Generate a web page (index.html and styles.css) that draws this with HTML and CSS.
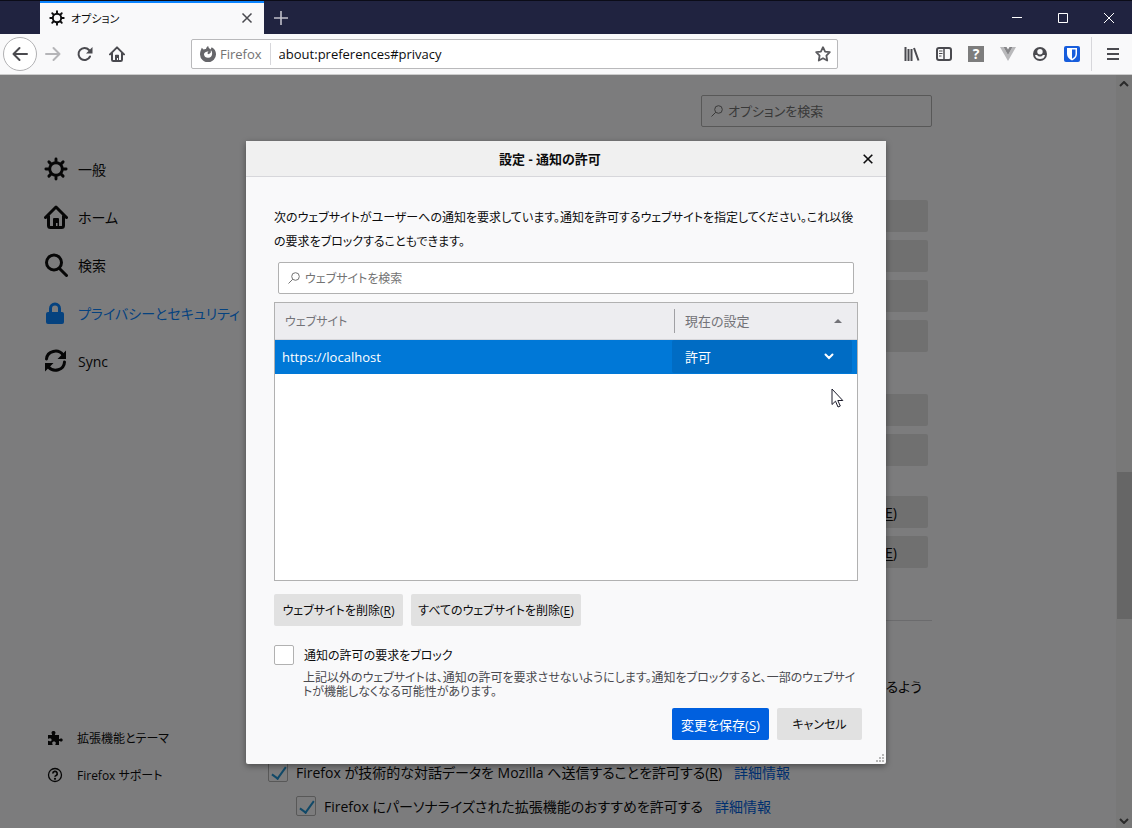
FILE: index.html
```html
<!DOCTYPE html>
<html lang="ja">

<head>
  <meta charset="UTF-8" />
  <meta name="viewport" content="width=device-width, initial-scale=1.0" />
  <title>オプション</title>
  <link rel="stylesheet" href="styles.css">
</head>

<body>
  <svg class="sprite" aria-hidden="true">
    <symbol id="gear" viewBox="0 0 24 24">
      <g fill="none" stroke="currentColor" stroke-linecap="round">
        <circle cx="12" cy="12" r="6.3" stroke-width="2.9" />
        <path stroke-width="2.9" d="M12 1.9v3M12 19.1v3M1.9 12h3M19.1 12h3M4.9 4.9l2 2M17.1 17.1l2 2M4.9 19.1l2-2M17.1 6.9l2-2" />
      </g>
    </symbol>
    <symbol id="home" viewBox="0 0 24 24">
      <path d="M1.5 12.5L12 2l10.500 10.500M4.500 11v9.500a2 2 0 0 0 2 2h11a2 2 0 0 0 2-2V11" fill="none" stroke="currentColor" stroke-width="3" stroke-linecap="round" stroke-linejoin="round" />
      <path d="M9 14a1 1 0 0 1 1-1h4a1 1 0 0 1 1 1v8h-1.500v-4h-1.500v4H9z" fill="currentColor" />
    </symbol>
  </svg>

  <header>
    <div class="tabbar">
      <div class="tab">
        <svg class="i16"><use href="#gear" /></svg>
        <span>オプション</span>
        <button class="tab-close" aria-label="タブを閉じる">
          <svg width="12" height="12" viewBox="0 0 12 12"><path d="M1.500 1.500l9 9M10.500 1.500l-9 9" stroke="#4a4a4f" stroke-width="1.500" /></svg>
        </button>
      </div>
      <button class="new-tab" aria-label="新しいタブ">
        <svg width="14" height="14" viewBox="0 0 14 14"><path d="M7 0v14M0 7h14" stroke="#c0c0ca" stroke-width="1.600" /></svg>
      </button>
      <div class="window-controls">
        <button aria-label="最小化"><svg width="10" height="10"><path d="M0 4.500h10" stroke="#fff" /></svg></button>
        <button aria-label="最大化"><svg width="10" height="10"><path d="M.5.5h9v9h-9z" fill="none" stroke="#fff" /></svg></button>
        <button aria-label="閉じる"><svg width="10" height="10"><path d="M0 0l10 10M10 0L0 10" stroke="#fff" /></svg></button>
      </div>
    </div>

    <div class="toolbar">
      <button class="back" aria-label="戻る">
        <svg class="i16" viewBox="0 0 16 16"><path d="M15 8H1.500M7.500 2l-6 6 6 6" fill="none" stroke="#4a4a4f" stroke-width="2" stroke-linecap="round" stroke-linejoin="round" /></svg>
      </button>
      <button class="tool" aria-label="進む">
        <svg class="i16" viewBox="0 0 16 16"><path d="M1 8h13.500M8.500 2l6 6-6 6" fill="none" stroke="#b5b5b8" stroke-width="2" stroke-linecap="round" stroke-linejoin="round" /></svg>
      </button>
      <button class="tool" aria-label="再読み込み">
        <svg class="i16" viewBox="0 0 16 16"><path d="M13 10.500A6 6 0 1 1 12 4" fill="none" stroke="#4a4a4f" stroke-width="2" stroke-linecap="round" /><path d="M15.500 1v6.500H9z" fill="#4a4a4f" /></svg>
      </button>
      <button class="tool" aria-label="ホーム"><svg class="i16"><use href="#home" /></svg></button>

      <div class="urlbar">
        <span class="identity">
          <svg class="i16" viewBox="0 0 16 16"><path d="M1.800 1.800L3.500 3.600C4.300 3 5.200 2.800 6 2.900 6.300 1.700 7 .7 8.200 0c.1 1.800 1.300 2.300 2.300 3.400l1.200-2.200c2.700 1.300 4.300 4 4.300 6.900A8 8 0 0 1 0 8.500C0 6 .8 4 1.800 1.800z" fill="#66666a" /><path d="M5.800 6l2.700-.8L7.300 7.300l1.400.9 2-1.500.2-2.400c1 1 1.400 2.300 1.200 3.600A4.100 4.100 0 0 1 4 8.400C4 7.300 4.700 6.500 5.800 6z" fill="#fff" /></svg>
          Firefox
        </span>
        <input type="text" aria-label="アドレス" value="about:preferences#privacy">
        <button class="star" aria-label="ブックマーク">
          <svg class="i16" viewBox="0 0 16 16"><path d="M8 1.200l2.100 4.400 4.700.6-3.400 3.400.8 4.900L8 12.200l-4.200 2.300.8-4.900L1.200 6.200l4.700-.6z" fill="none" stroke="#5a5a5e" stroke-width="1.800" stroke-linejoin="round" /></svg>
        </button>
      </div>

      <button class="tool" aria-label="ライブラリ">
        <svg class="i16" viewBox="0 0 16 16"><path d="M1.500 1v14M4.500 3v12M7.500 3v12M10 2l4.500 12.500" stroke="#4a4a4f" stroke-width="2" fill="none" /></svg>
      </button>
      <button class="tool" aria-label="サイドバー">
        <svg class="i16" viewBox="0 0 16 16"><rect x="1" y="2" width="14" height="12" rx="2" fill="none" stroke="#4a4a4f" stroke-width="2" /><path d="M8 2v12" stroke="#4a4a4f" stroke-width="1.500" /><path d="M3 5h3.500M3 7.500h3.500M3 10h2.500" stroke="#4a4a4f" /></svg>
      </button>
      <button class="tool" aria-label="ヘルプ"><span class="unknown">?</span></button>
      <button class="tool" aria-label="Vue">
        <svg class="i16" viewBox="0 0 16 16"><path d="M0 1h3.500L8 9l4.500-8H16L8 15z" fill="#b9b9bb" /><path d="M3.500 1h3L8 3.500 9.500 1h3L8 9z" fill="#858588" /></svg>
      </button>
      <button class="tool" aria-label="アカウント">
        <svg class="i16" viewBox="0 0 16 16"><circle cx="8" cy="8" r="7" fill="#4a4a4f" /><circle cx="8" cy="5.800" r="2.700" fill="#f9f9fa" /><path d="M3 9h2a3.600 3.600 0 0 0 6 0h2c-.5 3-2.500 4-5 4s-4.500-1-5-4z" fill="#f9f9fa" /></svg>
      </button>
      <button class="tool" aria-label="Bitwarden">
        <svg class="i16" viewBox="0 0 16 16"><rect width="16" height="16" rx="2" fill="#175ddc" /><path d="M3 2h10v6c0 3-2 5-5 6.500C5 13 3 11 3 8z" fill="#fff" /><path d="M8 3.500h3.500V8c0 2-1.300 3.500-3.500 4.800z" fill="#175ddc" /></svg>
      </button>
      <button class="menu" aria-label="メニュー">
        <svg class="i16" viewBox="0 0 16 16"><path d="M2 3h12M2 8h12M2 13h12" stroke="#4a4a4f" stroke-width="2" /></svg>
      </button>
    </div>
  </header>

  <div class="content">
    <aside>
      <nav>
        <a href="#general"><svg class="i24"><use href="#gear" /></svg>一般</a>
        <a href="#home-page"><svg class="i24"><use href="#home" /></svg>ホーム</a>
        <a href="#search">
          <svg class="i24" viewBox="0 0 24 24"><path d="M15.500 15.500l7 7" stroke="currentColor" stroke-width="3" stroke-linecap="round" /><circle cx="10" cy="9.500" r="7.500" fill="none" stroke="currentColor" stroke-width="3" /></svg>検索</a>
        <a href="#privacy" class="selected">
          <svg class="i24" viewBox="0 0 24 24"><rect x="2" y="11" width="18" height="12" rx="2" fill="currentColor" /><path d="M6.500 12V7.500a4.500 4.500 0 0 1 9 0V12" fill="none" stroke="currentColor" stroke-width="3" /></svg>プライバシーとセキュリティ</a>
        <a href="#sync">
          <svg class="i24" viewBox="0 0 24 24"><path d="M2.500 10A9 8.500 0 0 1 19 6M20.500 13A9 8.500 0 0 1 4.500 18" fill="none" stroke="currentColor" stroke-width="3" stroke-linecap="round" /><path d="M22 1.500V10h-8.500zM1 22.500V14h8.500z" fill="currentColor" /></svg>Sync</a>
      </nav>
      <div class="support">
        <a href="#addons">
          <svg class="i16" viewBox="0 0 16 16"><path d="M1 5h4c.5-.6-.5-1-.5-2.200C4.500 1.500 5.400 1 6.500 1s2 .5 2 1.800C8.500 4 7.500 4.400 8 5h4v4c.6.500 1-.5 2.200-.5 1 0 1.500.7 1.500 1.500s-.5 1.600-1.500 1.600c-1.200 0-1.600-1-2.200-.6v4H8.500c-.6-.5.3-1 .3-2s-.8-1.500-1.800-1.500-1.800.5-1.800 1.500.8 1.500.3 2H1v-4c.5-.5 1 .3 2 .3S4.600 11 4.600 10 4 8.300 3 8.300s-1.500.8-2 .3z" fill="currentColor" /></svg>拡張機能とテーマ</a>
        <a href="#support">
          <svg class="i16" viewBox="0 0 16 16"><circle cx="8" cy="8" r="6.500" fill="none" stroke="currentColor" stroke-width="1.300" /><path d="M5.800 6.500a2.200 2.200 0 1 1 3.300 1.900c-.8.400-1.100.7-1.100 1.400" fill="none" stroke="currentColor" stroke-width="1.700" /><circle cx="8" cy="11.800" r="1.100" fill="currentColor" /></svg>Firefox サポート</a>
      </div>
    </aside>

    <main>
      <label class="search page-search">
        <svg width="12" height="12" viewBox="0 0 12 12"><circle cx="7.500" cy="4.500" r="3.800" fill="none" stroke="currentColor" /><path d="M4.800 7.200L.5 11.500" stroke="currentColor" /></svg>
        <input type="text" placeholder="オプションを検索" aria-label="オプションを検索">
      </label>
      <div class="group permissions">
        <button aria-label="位置情報の設定"></button>
        <button aria-label="カメラの設定"></button>
        <button aria-label="マイクの設定"></button>
        <button aria-label="通知の設定"></button>
      </div>
      <div class="group exceptions">
        <button aria-label="自動再生の設定"></button>
        <button aria-label="VR の設定"></button>
      </div>
      <div class="group allowed">
        <button>許可サイト(<u>E</u>)</button>
        <button>例外サイト(<u>E</u>)</button>
      </div>
      <hr>
      <p>収集するよう</p>
      <div class="check-row">
        <input type="checkbox" id="telemetry" checked>
        <label for="telemetry">Firefox が技術的な対話データを Mozilla へ送信することを許可する(<u>R</u>)</label>
        <a href="#telemetry">詳細情報</a>
      </div>
      <div class="check-row nested">
        <input type="checkbox" id="recommend" checked>
        <label for="recommend">Firefox にパーソナライズされた拡張機能のおすすめを許可する</label>
        <a href="#recommend">詳細情報</a>
      </div>
    </main>

    <div class="scrollbar">
      <svg width="10" height="6" viewBox="0 0 10 6"><path d="M1 5l4-4 4 4" fill="none" stroke="#555" stroke-width="2" /></svg>
      <div class="thumb"></div>
      <svg width="10" height="6" viewBox="0 0 10 6"><path d="M1 1l4 4 4-4" fill="none" stroke="#555" stroke-width="2" /></svg>
    </div>

    <div class="overlay">
      <section class="dialog" role="dialog" aria-labelledby="dialog-title">
        <div class="titlebar">
          <h1 id="dialog-title">設定 - 通知の許可</h1>
          <button class="close" aria-label="閉じる">
            <svg width="10" height="10" viewBox="0 0 10 10"><path d="M.7.7l8.600 8.600M9.300.7L.7 9.300" stroke="#0c0c0d" stroke-width="1.600" /></svg>
          </button>
        </div>
        <div class="dialog-body">
          <p class="intro">次のウェブサイトがユーザーへの通知を要求しています。通知を許可するウェブサイトを指定してください。これ以後<br>の要求をブロックすることもできます。</p>
          <label class="search site-search">
            <svg width="12" height="12" viewBox="0 0 12 12"><circle cx="7.500" cy="4.500" r="3.800" fill="none" stroke="currentColor" /><path d="M4.800 7.200L.5 11.500" stroke="currentColor" /></svg>
            <input type="text" placeholder="ウェブサイトを検索" aria-label="ウェブサイトを検索">
          </label>
          <div class="site-list">
            <table>
              <thead>
                <tr>
                  <th class="site">ウェブサイト</th>
                  <th><span class="status">現在の設定<svg width="8" height="4"><path d="M0 4l4-4 4 4z" fill="#737378" /></svg></span></th>
                </tr>
              </thead>
              <tbody>
                <tr>
                  <td class="url">https://localhost</td>
                  <td>
                    <div class="permission">
                      <select aria-label="現在の設定"><option>許可</option><option>ブロック</option></select>
                      <svg width="10" height="7" viewBox="0 0 10 7"><path d="M1.500 1.500L5 5l3.500-3.500" fill="none" stroke="#fff" stroke-width="2" stroke-linecap="round" /></svg>
                    </div>
                  </td>
                </tr>
              </tbody>
            </table>
          </div>
          <div class="buttons">
            <button class="remove">ウェブサイトを削除(<u>R</u>)</button>
            <button class="remove-all">すべてのウェブサイトを削除(<u>E</u>)</button>
          </div>
          <div class="block-row">
            <input type="checkbox" id="block-new">
            <label for="block-new">通知の許可の要求をブロック</label>
          </div>
          <p class="note">上記以外のウェブサイトは、通知の許可を要求させないようにします。通知をブロックすると、一部のウェブサイ<br>トが機能しなくなる可能性があります。</p>
          <div class="buttons actions">
            <button class="primary">変更を保存(<u>S</u>)</button>
            <button class="cancel">キャンセル</button>
          </div>
        </div>
        <svg class="resizer" width="9" height="9"><path d="M6 0h2v2H6zM3 3h2v2H3zM6 3h2v2H6zM0 6h2v2H0zM3 6h2v2H3zM6 6h2v2H6z" fill="#b8b8b8" /></svg>
        <svg class="pointer" width="13" height="20" viewBox="0 0 13 20"><path d="M1 1v15.500l3.500-3.300 2.500 5.800 2.300-1-2.500-5.500h5z" fill="#fff" stroke="#1b1b2b" /></svg>
      </section>
    </div>
  </div>
</body>

</html>
```
FILE: styles.css
```css
* {
  box-sizing: border-box;
}

body {
  margin: 0;
  height: 100vh;
  display: flex;
  flex-direction: column;
  overflow: hidden;
  font-family: "Open Sans", "Noto Sans CJK JP", sans-serif;
  font-size: 13px;
  font-feature-settings: "palt";
  color: #0c0c0d;
  background: #f9f9fa;
}

button,
input,
select {
  font: inherit;
  font-feature-settings: inherit;
  color: inherit;
  margin: 0;
  padding: 0;
  border: 0;
  background: none;
  outline: 0;
}

button {
  white-space: nowrap;
}

svg {
  display: block;
  flex: none;
}

a {
  text-decoration: none;
}

u {
  text-underline-offset: 2px;
}

.sprite {
  display: none;
}

.i16 {
  width: 16px;
  height: 16px;
}

.i24 {
  width: 24px;
  height: 24px;
}

/* tabs */
.tabbar {
  display: flex;
  height: 34px;
  padding-left: 40px;
  border-top: 1px solid #0b0c18;
  background: #202340;
}

.tab {
  display: flex;
  align-items: center;
  gap: 6px;
  width: 224px;
  padding: 0 7px 2px 9px;
  border-top: 2px solid #0a84ff;
  background: #f9f9fa;
  font-size: 11px;
}

.tab-close {
  display: grid;
  place-items: center;
  width: 20px;
  height: 20px;
  margin-left: auto;
}

.new-tab {
  display: grid;
  place-items: center;
  width: 34px;
}

.window-controls {
  display: flex;
  margin-left: auto;
}

.window-controls button {
  display: grid;
  place-items: center;
  width: 46px;
}

/* toolbar */
.toolbar {
  display: flex;
  align-items: center;
  height: 41px;
  padding-left: 3px;
  border-bottom: 1px solid #ccc;
  color: #4a4a4f;
}

.back {
  display: grid;
  place-items: center;
  width: 34px;
  height: 34px;
  border: 1px solid #b1b1b3;
  border-radius: 50%;
  background: #fff;
}

.tool,
.menu {
  display: grid;
  place-items: center;
  width: 32px;
  height: 34px;
}

.menu {
  width: 41px;
  margin-left: 3px;
  padding-left: 2px;
  border-left: 1px solid #d7d7db;
}

.unknown {
  width: 16px;
  height: 16px;
  background: #7d7d7d;
  color: #fff;
  font-weight: bold;
  font-size: 14px;
  line-height: 16px;
  text-align: center;
}

.urlbar {
  display: flex;
  align-items: center;
  flex: 1;
  height: 30px;
  margin: 0 58px;
  border: 1px solid #b9b9bb;
  border-radius: 2px;
  background: #fff;
}

.identity {
  display: flex;
  align-items: center;
  gap: 4px;
  height: 22px;
  padding: 0 8px;
  border-right: 1px solid #d7d7db;
  color: #737373;
}

.urlbar input {
  flex: 1;
  padding-left: 8px;
  color: #0c0c0d;
}

.star {
  padding: 0 6px;
}

/* preferences page */
.content {
  position: relative;
  display: flex;
  flex: 1;
  min-height: 0;
}

aside {
  display: flex;
  flex-direction: column;
  justify-content: space-between;
  width: 268px;
  padding: 70px 0 35px 44px;
}

aside a {
  display: flex;
  align-items: center;
  gap: 10px;
  height: 48px;
  font-size: 14px;
  color: inherit;
  white-space: nowrap;
}

aside .selected {
  color: #0a84ff;
}

.support a {
  gap: 14px;
  height: 37px;
  padding-left: 3px;
  font-size: 12px;
}

main {
  display: flex;
  flex-direction: column;
  width: 664px;
  padding-top: 20px;
  font-size: 14px;
}

.search {
  display: flex;
  flex: none;
  align-items: center;
  gap: 5px;
  height: 32px;
  padding: 0 9px;
  border: 1px solid #b1b1b1;
  border-radius: 2px;
  background: #fff;
  color: #737373;
}

.search input {
  flex: 1;
  min-width: 0;
}

.search input::placeholder {
  color: #737373;
  opacity: 1;
}

.page-search {
  align-self: flex-end;
  width: 231px;
  background: #f9f9fa;
  font-size: 13px;
}

.group {
  display: flex;
  flex-direction: column;
  align-items: flex-end;
  gap: 8px;
  padding-right: 4px;
}

.group button,
.buttons button {
  height: 32px;
  border-radius: 2px;
  background: #e1e1e1;
}

.group button {
  width: 150px;
}

.permissions {
  margin-top: 73px;
}

.exceptions {
  margin-top: 42px;
}

.allowed {
  margin-top: 30px;
}

.allowed button {
  padding-right: 31px;
  text-align: right;
}

hr {
  width: 100%;
  margin: 52px 0 0;
  border: 0;
  border-top: 1px solid #d7d7db;
}

main p {
  margin: 55px 0 64px;
  padding-right: 10px;
  line-height: 22px;
  text-align: right;
}

.check-row {
  display: flex;
  flex: none;
  align-items: center;
  height: 20px;
  margin-bottom: 14px;
  white-space: nowrap;
}

.check-row a {
  margin-left: 12px;
  color: #0060df;
}

.nested {
  padding-left: 28px;
}

input[type="checkbox"] {
  appearance: none;
  position: relative;
  width: 20px;
  height: 20px;
  margin-right: 8px;
  border: 1px solid #b1b1b1;
  border-radius: 2px;
}

input[type="checkbox"]:checked::after {
  content: "";
  position: absolute;
  left: 6px;
  top: 1px;
  width: 6px;
  height: 13px;
  border: solid #2292d0;
  border-width: 0 2px 2px 0;
  transform: rotate(36deg);
}

.scrollbar {
  display: flex;
  flex-direction: column;
  align-items: center;
  width: 16px;
  margin-left: auto;
  padding: 6px 0 4px;
  background: #f0f0f0;
}

.thumb {
  width: 15px;
  height: 147px;
  margin: 385px 0 auto;
  background: #cdcdcd;
}

/* dialog */
.overlay {
  position: absolute;
  inset: 0;
  display: flex;
  align-items: center;
  justify-content: center;
  padding-top: 2px;
  background: rgba(0, 0, 0, 0.5);
}

.dialog {
  position: relative;
  width: 640px;
  border-radius: 2px;
  background: #f9f9fa;
  box-shadow: 0 2px 6px rgba(0, 0, 0, 0.4);
}

.titlebar {
  display: flex;
  align-items: center;
  height: 36px;
  border-bottom: 1px solid #d7d7db;
  background: #f0f0f0;
}

.titlebar h1 {
  flex: 1;
  margin: 0;
  font-size: 13px;
  text-align: center;
}

.close {
  display: grid;
  place-items: center;
  width: 28px;
  height: 28px;
  margin-right: 4px;
}

.dialog-body {
  padding: 29px 24px 24px 28px;
}

.intro {
  margin: 0 0 8px;
  font-size: 12px;
  line-height: 24px;
  white-space: nowrap;
}

.site-search {
  margin: 0 8px 8px 4px;
  font-size: 12px;
}

.site-list {
  height: 279px;
  margin-right: 4px;
  border: 1px solid #b1b1b1;
  background: #fff;
}

table {
  width: 100%;
  border-collapse: collapse;
  table-layout: fixed;
}

th,
td {
  height: 35px;
  padding: 0;
  text-align: left;
  font-weight: normal;
}

th {
  height: 36px;
  border-bottom: 1px solid #d7d7db;
  background: #ededf0;
  color: #737378;
}

.site {
  width: 397px;
  padding-left: 10px;
  font-size: 12px;
}

.status {
  display: flex;
  align-items: center;
  justify-content: space-between;
  height: 24px;
  margin-left: 2px;
  padding: 0 15px 0 10px;
  border-left: 1px solid #a0a0a4;
}

td {
  background: #0078d7;
  color: #fff;
}

.url {
  padding-left: 7px;
}

.permission {
  display: flex;
  align-items: center;
  height: 33px;
  margin-right: 5px;
  padding: 0 18px 0 13px;
  border-radius: 2px;
  background: #006cc4;
}

.permission select {
  flex: 1;
  appearance: none;
}

.buttons {
  display: flex;
  gap: 8px;
  margin-top: 13px;
  font-size: 12px;
}

.remove {
  width: 129px;
}

.remove-all {
  width: 170px;
}

.block-row {
  display: flex;
  align-items: center;
  margin-top: 19px;
  font-size: 12px;
}

.block-row input[type="checkbox"] {
  margin-right: 10px;
  background: #fff;
}

.note {
  margin: 6px 0 0 29px;
  font-size: 12px;
  line-height: 14px;
  color: #4a4a4f;
  white-space: nowrap;
}

.actions {
  justify-content: flex-end;
  margin-top: 9px;
}

.buttons .primary {
  width: 97px;
  background: #0060df;
  color: #fff;
  font-size: 13px;
}

.cancel {
  width: 85px;
}

.resizer {
  position: absolute;
  right: 1px;
  bottom: 1px;
}

.pointer {
  position: absolute;
  left: 585px;
  top: 247px;
}
```
